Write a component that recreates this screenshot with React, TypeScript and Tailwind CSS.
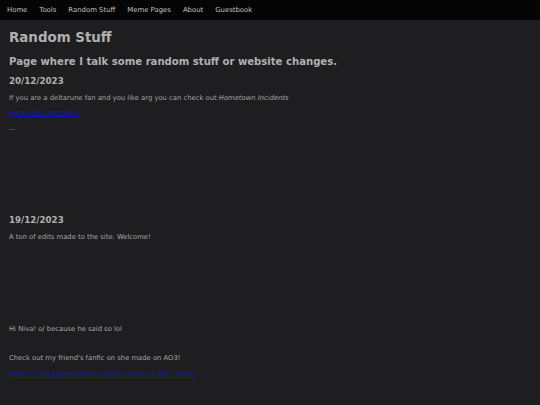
import React from 'react';

const navItems = ['Home', 'Tools', 'Random Stuff', 'Meme Pages', 'About', 'Guestbook'];

export default function App() {
  return (
    <div className="min-h-[405px] w-full bg-[#1e1e20] font-['DejaVu_Sans',sans-serif] text-[#a4a4a4]">
      {/* Top nav */}
      <nav className="flex h-[20px] items-center gap-[12px] bg-[#050505] pl-[7px] text-[6.9px] text-[#c0c0c0]">
        {navItems.map((item) => (
          <a key={item} href="#" className="leading-none">
            {item}
          </a>
        ))}
      </nav>

      <main className="flex flex-col items-start pl-[9px]">
        <h1 className="mt-[11px] text-[13.4px] font-bold leading-[14px] text-[#b0b0b0]">Random Stuff</h1>
        <h2 className="mt-[10.5px] text-[10.1px] font-bold leading-[11px] text-[#b0b0b0]">
          Page where I talk some random stuff or website changes.
        </h2>

        {/* 20/12/2023 */}
        <h3 className="mt-[10px] text-[8.7px] font-bold leading-[9px] text-[#b0b0b0]">20/12/2023</h3>
        <p className="mt-[8.5px] text-[6.8px] leading-[8px]">
          If you are a deltarune fan and you like arg you can check out <i>Hometown Incidents</i>
        </p>
        <a href="#" className="mt-[7px] text-[6.8px] leading-[8px] text-[#1414b8] underline">
          Hometown Incidents
        </a>
        <p className="mt-[7px] text-[6.8px] leading-[8px]">...</p>

        {/* 19/12/2023 */}
        <h3 className="mt-[83.5px] text-[8.7px] font-bold leading-[9px] text-[#b0b0b0]">19/12/2023</h3>
        <p className="mt-[8.5px] text-[6.8px] leading-[8px]">A ton of edits made to the site. Welcome!</p>

        <p className="mt-[84px] text-[6.8px] leading-[8px]">Hi Niva! o/ because he said so lol</p>
        <p className="mt-[21px] text-[6.8px] leading-[8px]">Check out my friend's fanfic on she made on AO3!</p>
        <a href="#" className="mt-[8px] text-[6.8px] leading-[8px] text-[#1414b8] underline">
          Fanfic of the game OMORI called Caveau in the Clouds
        </a>
      </main>
    </div>
  );
}
